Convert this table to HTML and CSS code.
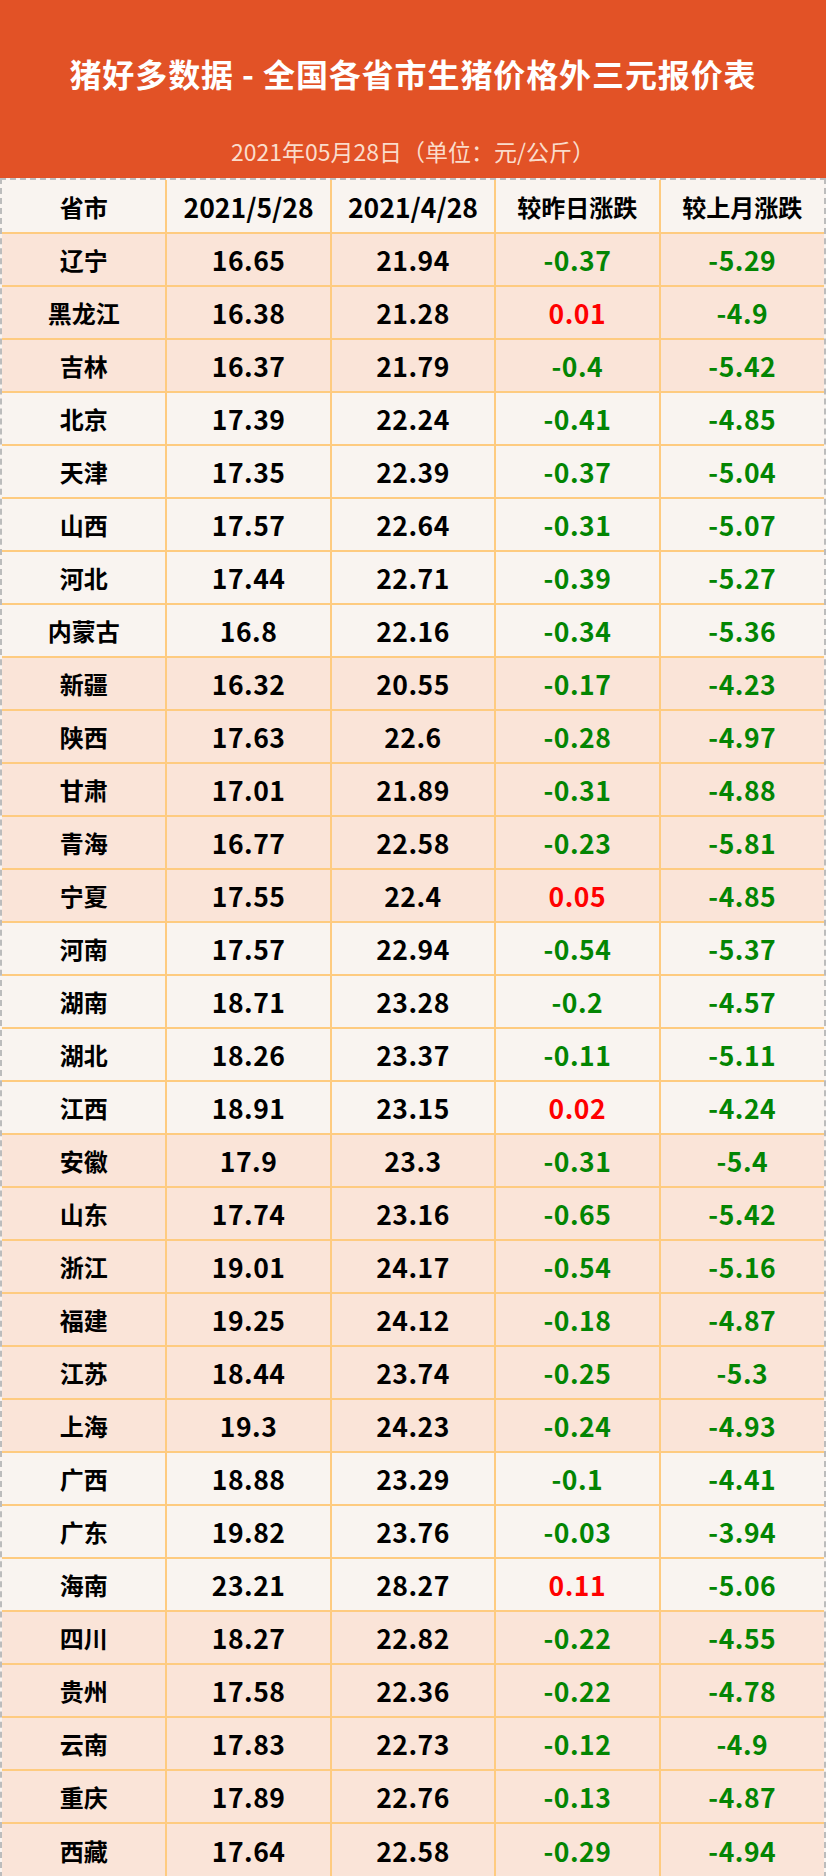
FILE: index.html
```html
<!DOCTYPE html>
<html lang="zh-CN">
<head>
<meta charset="utf-8">
<title>猪好多数据 - 全国各省市生猪价格外三元报价表</title>
<link rel="stylesheet" href="styles.css">
</head>
<body>
<header class="banner">
  <h1 class="title">猪好多数据 - 全国各省市生猪价格外三元报价表</h1>
  <p class="subtitle">2021年05月28日（单位：元/公斤）</p>
</header>
<div class="sheet">
<table class="prices">
  <colgroup><col><col><col><col><col></colgroup>
  <thead>
    <tr><th class="cn">省市</th><th class="num">2021/5/28</th><th class="num">2021/4/28</th><th class="cn">较昨日涨跌</th><th class="cn">较上月涨跌</th></tr>
  </thead>
  <tbody>
    <tr class="pink"><td class="cn">辽宁</td><td>16.65</td><td>21.94</td><td class="down">-0.37</td><td class="down">-5.29</td></tr>
    <tr class="pink"><td class="cn">黑龙江</td><td>16.38</td><td>21.28</td><td class="up">0.01</td><td class="down">-4.9</td></tr>
    <tr class="pink"><td class="cn">吉林</td><td>16.37</td><td>21.79</td><td class="down">-0.4</td><td class="down">-5.42</td></tr>
    <tr class="light"><td class="cn">北京</td><td>17.39</td><td>22.24</td><td class="down">-0.41</td><td class="down">-4.85</td></tr>
    <tr class="light"><td class="cn">天津</td><td>17.35</td><td>22.39</td><td class="down">-0.37</td><td class="down">-5.04</td></tr>
    <tr class="light"><td class="cn">山西</td><td>17.57</td><td>22.64</td><td class="down">-0.31</td><td class="down">-5.07</td></tr>
    <tr class="light"><td class="cn">河北</td><td>17.44</td><td>22.71</td><td class="down">-0.39</td><td class="down">-5.27</td></tr>
    <tr class="light"><td class="cn">内蒙古</td><td>16.8</td><td>22.16</td><td class="down">-0.34</td><td class="down">-5.36</td></tr>
    <tr class="pink"><td class="cn">新疆</td><td>16.32</td><td>20.55</td><td class="down">-0.17</td><td class="down">-4.23</td></tr>
    <tr class="pink"><td class="cn">陕西</td><td>17.63</td><td>22.6</td><td class="down">-0.28</td><td class="down">-4.97</td></tr>
    <tr class="pink"><td class="cn">甘肃</td><td>17.01</td><td>21.89</td><td class="down">-0.31</td><td class="down">-4.88</td></tr>
    <tr class="pink"><td class="cn">青海</td><td>16.77</td><td>22.58</td><td class="down">-0.23</td><td class="down">-5.81</td></tr>
    <tr class="pink"><td class="cn">宁夏</td><td>17.55</td><td>22.4</td><td class="up">0.05</td><td class="down">-4.85</td></tr>
    <tr class="light"><td class="cn">河南</td><td>17.57</td><td>22.94</td><td class="down">-0.54</td><td class="down">-5.37</td></tr>
    <tr class="light"><td class="cn">湖南</td><td>18.71</td><td>23.28</td><td class="down">-0.2</td><td class="down">-4.57</td></tr>
    <tr class="light"><td class="cn">湖北</td><td>18.26</td><td>23.37</td><td class="down">-0.11</td><td class="down">-5.11</td></tr>
    <tr class="light"><td class="cn">江西</td><td>18.91</td><td>23.15</td><td class="up">0.02</td><td class="down">-4.24</td></tr>
    <tr class="pink"><td class="cn">安徽</td><td>17.9</td><td>23.3</td><td class="down">-0.31</td><td class="down">-5.4</td></tr>
    <tr class="pink"><td class="cn">山东</td><td>17.74</td><td>23.16</td><td class="down">-0.65</td><td class="down">-5.42</td></tr>
    <tr class="pink"><td class="cn">浙江</td><td>19.01</td><td>24.17</td><td class="down">-0.54</td><td class="down">-5.16</td></tr>
    <tr class="pink"><td class="cn">福建</td><td>19.25</td><td>24.12</td><td class="down">-0.18</td><td class="down">-4.87</td></tr>
    <tr class="pink"><td class="cn">江苏</td><td>18.44</td><td>23.74</td><td class="down">-0.25</td><td class="down">-5.3</td></tr>
    <tr class="pink"><td class="cn">上海</td><td>19.3</td><td>24.23</td><td class="down">-0.24</td><td class="down">-4.93</td></tr>
    <tr class="light"><td class="cn">广西</td><td>18.88</td><td>23.29</td><td class="down">-0.1</td><td class="down">-4.41</td></tr>
    <tr class="light"><td class="cn">广东</td><td>19.82</td><td>23.76</td><td class="down">-0.03</td><td class="down">-3.94</td></tr>
    <tr class="light"><td class="cn">海南</td><td>23.21</td><td>28.27</td><td class="up">0.11</td><td class="down">-5.06</td></tr>
    <tr class="pink"><td class="cn">四川</td><td>18.27</td><td>22.82</td><td class="down">-0.22</td><td class="down">-4.55</td></tr>
    <tr class="pink"><td class="cn">贵州</td><td>17.58</td><td>22.36</td><td class="down">-0.22</td><td class="down">-4.78</td></tr>
    <tr class="pink"><td class="cn">云南</td><td>17.83</td><td>22.73</td><td class="down">-0.12</td><td class="down">-4.9</td></tr>
    <tr class="pink"><td class="cn">重庆</td><td>17.89</td><td>22.76</td><td class="down">-0.13</td><td class="down">-4.87</td></tr>
    <tr class="pink"><td class="cn">西藏</td><td>17.64</td><td>22.58</td><td class="down">-0.29</td><td class="down">-4.94</td></tr>
  </tbody>
</table>
</div>
</body>
</html>
```
FILE: styles.css
```css
html, body {
  margin: 0;
  padding: 0;
  background: #f9f4f0;
}
body {
  width: 826px;
  font-family: "Noto Sans CJK SC", "Noto Sans", sans-serif;
}
.banner {
  height: 178px;
  box-sizing: border-box;
  background: #e25226;
  display: flex;
  flex-direction: column;
  align-items: center;
  padding-top: 53px;
}
.title {
  margin: 0;
  font-size: 32px;
  line-height: 40px;
  letter-spacing: 0.9px;
  font-weight: 700;
  color: #ffffff;
  white-space: nowrap;
}
.subtitle {
  margin: 43px 0 0;
  font-size: 23px;
  line-height: 30px;
  font-weight: 400;
  color: #fadccb;
  white-space: nowrap;
}
.sheet {
  border: 2px dashed #bcbcbc;
}
.prices {
  width: 100%;
  border-collapse: collapse;
  table-layout: fixed;
}
.prices th,
.prices td {
  padding: 0;
  text-align: center;
  font-weight: 700;
  font-size: 26.5px;
  letter-spacing: 0.5px;
  color: #000;
  border-right: 2px solid #fecb80;
  border-bottom: 2px solid #fecb80;
  white-space: nowrap;
}
.prices th.num {
  letter-spacing: 0;
}
.prices th:last-child,
.prices td:last-child {
  border-right: none;
}
.prices tbody tr:last-child td {
  border-bottom: none;
}
.prices thead tr {
  height: 53px;
  background: #f9f4f0;
}
.prices tbody tr {
  height: 53px;
}
.prices th.cn,
.prices td.cn {
  font-size: 24px;
  letter-spacing: 0;
}
.pink {
  background: #fae4d8;
}
.light {
  background: #f9f4f0;
}
.prices td.down {
  color: #038503;
}
.prices td.up {
  color: #ff0000;
}
```
